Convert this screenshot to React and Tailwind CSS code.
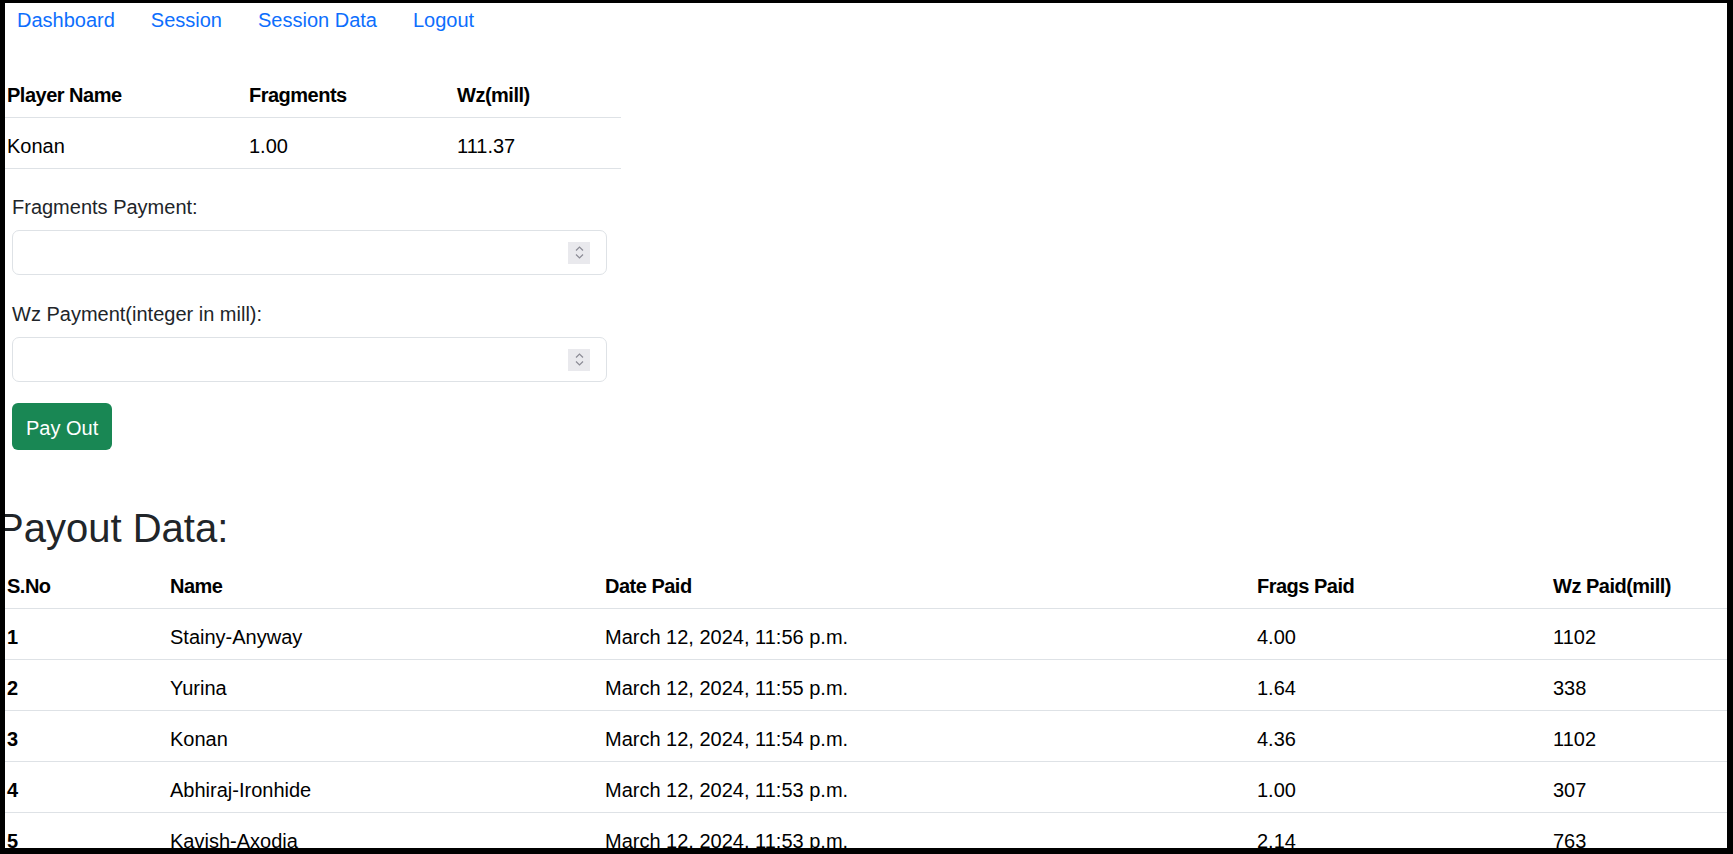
import React from "react";

const payouts = [
  { n: "1", name: "Stainy-Anyway", date: "March 12, 2024, 11:56 p.m.", frags: "4.00", wz: "1102" },
  { n: "2", name: "Yurina", date: "March 12, 2024, 11:55 p.m.", frags: "1.64", wz: "338" },
  { n: "3", name: "Konan", date: "March 12, 2024, 11:54 p.m.", frags: "4.36", wz: "1102" },
  { n: "4", name: "Abhiraj-Ironhide", date: "March 12, 2024, 11:53 p.m.", frags: "1.00", wz: "307" },
  { n: "5", name: "Kavish-Axodia", date: "March 12, 2024, 11:53 p.m.", frags: "2.14", wz: "763" },
  { n: "6", name: "Stainy-Anyway", date: "March 12, 2024, 11:52 p.m.", frags: "1.00", wz: "300" },
];

function Spinner() {
  return (
    <div className="ml-auto flex h-[22px] w-[22px] flex-col items-center justify-center gap-[3px] bg-[#e9e9ed]">
      <svg width="9" height="5" viewBox="0 0 9 5" fill="none">
        <path d="M1 4.5 L4.5 1 L8 4.5" stroke="#8b8b95" strokeWidth="1.2" />
      </svg>
      <svg width="9" height="5" viewBox="0 0 9 5" fill="none">
        <path d="M1 0.5 L4.5 4 L8 0.5" stroke="#8b8b95" strokeWidth="1.2" />
      </svg>
    </div>
  );
}

function NumberBox() {
  return (
    <div className="mt-[8px] flex h-[45px] items-center rounded-[7px] border border-[#dee2e6] bg-white pl-[15px] pr-[16px]">
      <input type="text" className="min-w-0 flex-1 bg-transparent text-[20px] text-[#212529] outline-none" />
      <Spinner />
    </div>
  );
}

export default function App() {
  return (
    <div className="relative h-[854px] w-[1733px] overflow-hidden bg-white font-['Liberation_Sans',Arial,sans-serif] text-[20px] leading-[30px] text-[#212529]">
      <div className="ml-[-3px] w-[1736px]">
        <nav className="ml-[2px] flex h-[40px] items-center">
          <a className="px-[18px] text-[#0d6efd]">Dashboard</a>
          <a className="px-[18px] text-[#0d6efd]">Session</a>
          <a className="px-[18px] text-[#0d6efd]">Session Data</a>
          <a className="px-[18px] text-[#0d6efd]">Logout</a>
        </nav>

        <div className="mt-[27px] w-[624px] text-black">
          <div className="flex h-[51px] items-center border-b border-[#dee2e6] pt-[5px] font-bold tracking-[-0.5px]">
            <div className="w-[242px] px-[10px]">Player Name</div>
            <div className="w-[208px] px-[10px]">Fragments</div>
            <div className="flex-1 px-[10px]">Wz(mill)</div>
          </div>
          <div className="flex h-[51px] items-center border-b border-[#dee2e6] pt-[5px]">
            <div className="w-[242px] px-[10px]">Konan</div>
            <div className="w-[208px] px-[10px]">1.00</div>
            <div className="flex-1 px-[10px]">111.37</div>
          </div>
        </div>

        <div className="mt-[23px] w-[625px] px-[15px]">
          <label className="block leading-[30px]">Fragments Payment:</label>
          <NumberBox />
          <label className="mt-[24px] block leading-[30px]">Wz Payment(integer in mill):</label>
          <NumberBox />
          <button className="mt-[21px] h-[47px] rounded-[6px] bg-[#198754] px-[14px] pt-[2px] text-[20px] leading-[30px] text-white">
            Pay Out
          </button>
        </div>

        <h2 className="mt-[54px] text-[40px] font-normal leading-[48px] text-[#212529]">Payout Data:</h2>

        <div className="mt-[6px] w-full text-black">
          <div className="flex h-[51px] items-center border-b border-[#dee2e6] pt-[5px] font-bold tracking-[-0.5px]">
            <div className="w-[163px] px-[10px]">S.No</div>
            <div className="w-[435px] px-[10px]">Name</div>
            <div className="w-[652px] px-[10px]">Date Paid</div>
            <div className="w-[296px] px-[10px]">Frags Paid</div>
            <div className="flex-1 px-[10px]">Wz Paid(mill)</div>
          </div>
          {payouts.map((r) => (
            <div key={r.n} className="flex h-[51px] items-center border-b border-[#dee2e6] pt-[5px]">
              <div className="w-[163px] px-[10px] font-bold">{r.n}</div>
              <div className="w-[435px] px-[10px]">{r.name}</div>
              <div className="w-[652px] px-[10px]">{r.date}</div>
              <div className="w-[296px] px-[10px]">{r.frags}</div>
              <div className="flex-1 px-[10px]">{r.wz}</div>
            </div>
          ))}
        </div>
      </div>

      <div className="pointer-events-none absolute inset-0 border-b-[6px] border-l-[5px] border-r-[6px] border-t-[3px] border-black" />
    </div>
  );
}
